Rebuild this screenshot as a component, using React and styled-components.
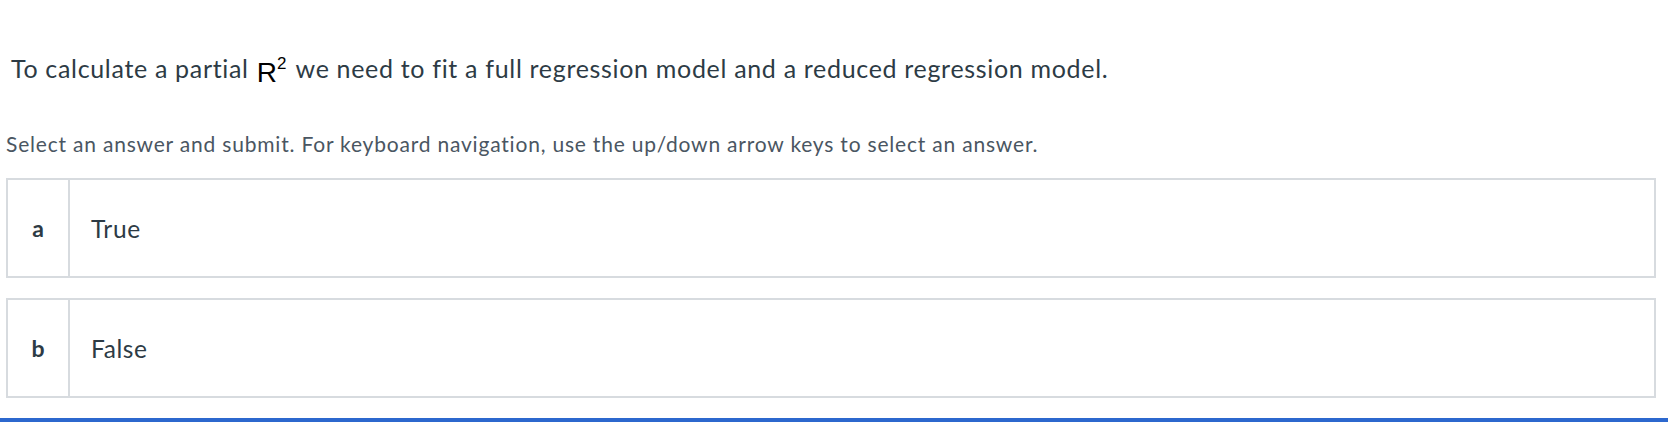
import React from 'react'
import styled, { createGlobalStyle } from 'styled-components'

const GlobalStyle = createGlobalStyle`
  html, body {
    margin: 0;
    padding: 0;
    background: #ffffff;
  }
  body {
    font-family: Lato, "Noto Sans", "Liberation Sans", sans-serif;
    font-variant-ligatures: none;
    color: #2d3b45;
  }
`

const answers = [
  { letter: 'a', text: 'True' },
  { letter: 'b', text: 'False' },
]

const Page = styled.div`
  display: flex;
  flex-direction: column;
  height: 422px;
  overflow: hidden;
`

const Content = styled.div`
  display: flex;
  flex-direction: column;
  padding: 48px 12px 20px 6px;
`

const Question = styled.p`
  margin: 0;
  padding-left: 5px;
  font-size: 25px;
  line-height: 40px;
  letter-spacing: 0.68px;
  color: #2d3b45;
`

const MathR = styled.span`
  display: inline-block;
  line-height: 0;
  font-family: "Liberation Sans", Arial, sans-serif;
  font-size: 28px;
  letter-spacing: 0;
  color: #000;
  position: relative;
  top: 4px;
  margin: 0 9px 0 1px;
`

const Sup = styled.span`
  font-size: 17px;
  position: relative;
  top: -13px;
`

const Instructions = styled.p`
  margin: 41px 0 19px;
  font-size: 21px;
  line-height: 30px;
  letter-spacing: 0.8px;
  color: #4a5662;
`

const AnswerList = styled.div`
  display: flex;
  flex-direction: column;
  gap: 20px;
`

const AnswerRow = styled.div`
  display: flex;
  height: 100px;
  box-sizing: border-box;
  border: 2px solid #d7dbdf;
  background: #fff;
`

const Letter = styled.div`
  width: 60px;
  flex: none;
  display: flex;
  align-items: center;
  justify-content: center;
  border-right: 2px solid #d7dbdf;
  font-size: 23px;
  font-weight: 700;
  color: #2d3b45;
`

const AnswerText = styled.div`
  display: flex;
  align-items: center;
  padding-left: 21px;
  font-size: 24.5px;
  letter-spacing: 0.6px;
  color: #2d3b45;
`

const BottomBar = styled.div`
  height: 4px;
  background: #2c68ce;
  margin-top: auto;
`

export default function App() {
  return (
    <Page>
      <GlobalStyle />
      <Content>
        <Question>
          To calculate a partial <MathR>R<Sup>2</Sup></MathR>we need to fit a full regression model and a reduced regression model.
        </Question>
        <Instructions>
          Select an answer and submit. For keyboard navigation, use the up/down arrow keys to select an answer.
        </Instructions>
        <AnswerList>
          {answers.map((a) => (
            <AnswerRow key={a.letter}>
              <Letter>{a.letter}</Letter>
              <AnswerText>{a.text}</AnswerText>
            </AnswerRow>
          ))}
        </AnswerList>
      </Content>
      <BottomBar />
    </Page>
  )
}
